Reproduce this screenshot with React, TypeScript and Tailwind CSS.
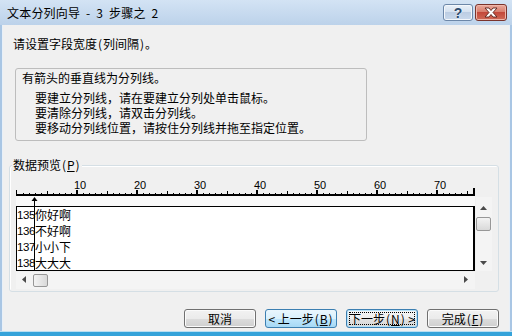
import React from "react";

const cjk = "font-['Noto_Sans_CJK_SC',sans-serif]";

function Paren({ c }: { c: string }) {
  return <span className="inline-block w-[6px] text-center">{c}</span>;
}

function Ruler() {
  const marks: React.ReactNode[] = [];
  for (let c = 1; c <= 75; c++) {
    const x = 1 + 6 * c;
    if (c % 10 === 0) {
      marks.push(<rect key={c} x={x - 1} y={12} width={2} height={4} fill="#000" />);
      marks.push(
        <text key={"t" + c} x={6 * c - 2} y={11} fontSize={11} fontFamily="Liberation Sans, sans-serif" fill="#000">
          {c}
        </text>
      );
    } else if (c % 5 === 0) {
      marks.push(<rect key={c} x={x} y={13} width={1} height={3} fill="#000" />);
    } else {
      marks.push(<rect key={c} x={x} y={15} width={1} height={1} fill="#000" />);
    }
  }
  return (
    <svg width="460" height="28" viewBox="0 0 460 28" className="block">
      <rect x={0} y={18} width={459} height={10} fill="#f9f9f9" />
      <rect x={0} y={16} width={459} height={2} fill="#000" />
      <rect x={0} y={12} width={1} height={4} fill="#000" />
      <rect x={457} y={10} width={2} height={6} fill="#000" />
      {marks}
      <rect x={18} y={22} width={1} height={6} fill="#000" />
      <path d="M18.5 19 L15.5 23 L21.5 23 Z" fill="#000" />
    </svg>
  );
}

function Arrow({ dir }: { dir: "up" | "down" | "left" | "right" }) {
  if (dir === "up" || dir === "down") {
    return (
      <svg width="7" height="4" viewBox="0 0 7 4" className="block">
        <path d={dir === "up" ? "M3.5 0 L7 4 L0 4 Z" : "M0 0 L7 0 L3.5 4 Z"} fill="#4a4a4a" />
      </svg>
    );
  }
  return (
    <svg width="4" height="7" viewBox="0 0 4 7" className="block">
      <path d={dir === "left" ? "M0 3.5 L4 0 L4 7 Z" : "M0 0 L4 3.5 L0 7 Z"} fill="#4a4a4a" />
    </svg>
  );
}

const rows = [
  ["135", "你好啊"],
  ["136", "不好啊"],
  ["137", "小小下"],
  ["138", "大大大"],
];

function Btn({
  children,
  kind = "normal",
}: {
  children: React.ReactNode;
  kind?: "normal" | "hover" | "default";
}) {
  if (kind === "hover") {
    return (
      <div className="relative flex h-[19px] w-[72px] items-center justify-center rounded-[3px] border border-[#3c7fb1] bg-[linear-gradient(#eaf6fd,#d9f0fc_50%,#bee6fd_50%,#a7d9f5)] text-[12px] leading-[16px] text-black">
        {children}
      </div>
    );
  }
  if (kind === "default") {
    return (
      <div className="relative flex h-[19px] w-[72px] items-center justify-center rounded-[3px] border border-[#3c7fb1] bg-[linear-gradient(#f6f6f6,#eeeeee_50%,#e2e2e2_50%,#d6d6d6)] text-[12px] leading-[16px] text-black shadow-[inset_0_0_0_1px_#b6e1f8]">
        <div className="absolute inset-[2px] border border-dotted border-black" />
        {children}
      </div>
    );
  }
  return (
    <div className="relative flex h-[19px] w-[72px] items-center justify-center rounded-[3px] border border-[#707070] bg-[linear-gradient(#f2f2f2,#ebebeb_50%,#dddddd_50%,#cfcfcf)] text-[12px] leading-[16px] text-black shadow-[inset_0_0_0_1px_#fbfbfb]">
      {children}
    </div>
  );
}

export default function App() {
  return (
    <div className={`flex h-[336px] w-[512px] flex-col overflow-hidden bg-[#f0f0f0] text-black ${cjk}`}>
      {/* title bar */}
      <div className="flex h-[25px] shrink-0 items-start bg-[linear-gradient(#d3e3f4,#bcd2ea)] pr-[5px]">
        <div className="pl-[7px] pt-[4px] text-[12px] leading-[17px] tracking-[0.2px] [word-spacing:3px] text-black">
          文本分列向导 - 3 步骤之 2
        </div>
        <div className="ml-auto mt-[4px] flex gap-[2px]">
          <div className="flex h-[17px] w-[30px] items-center justify-center rounded-[3px] border border-[#6c87a8] bg-[linear-gradient(#e9f0f8,#d3e0ef_50%,#bccde3_50%,#c9d9ec)] shadow-[inset_0_0_0_1px_#f3f7fb]">
            <span className="font-['Liberation_Sans',sans-serif] text-[14px] font-bold leading-none text-[#2c4a6e] [text-shadow:0_0_2px_#fff]">?</span>
          </div>
          <div className="flex h-[17px] w-[32px] items-center justify-center rounded-[3px] border border-[#7a332b] bg-[linear-gradient(#e9a99c,#d67a69_50%,#c3483a_50%,#cf6a57)] shadow-[inset_0_0_0_1px_#eeb6aa]">
            <svg width="14" height="11" viewBox="0 0 14 11">
              <path
                d="M1 1 H5 L7 3.5 L9 1 H13 L9 5.5 L13 10 H9 L7 7.5 L5 10 H1 L5 5.5 Z"
                fill="#fff"
                stroke="#5a2019"
                strokeWidth="0.9"
                strokeLinejoin="round"
              />
            </svg>
          </div>
        </div>
      </div>

      <div className="flex min-h-0 flex-1">
        <div className="w-[3px] shrink-0 border-r border-r-[#e8f0f8] bg-[#a9c6e4]" />
        {/* client */}
        <div className="flex min-w-0 flex-1 flex-col">
          <div className="ml-[10px] mt-[11px] text-[12px] leading-[16px]">
            请设置字段宽度<Paren c="(" />列间隔<Paren c=")" />。
          </div>

          <div className="ml-[12px] mt-[16px] flex h-[73px] w-[352px] flex-col rounded-[3px] border border-[#bdbdbd] pl-[6px] pt-[1px] text-[12px] leading-[15px]">
            <div>有箭头的垂直线为分列线。</div>
            <div className="mt-[5px] pl-[13px]">
              <div>要建立分列线，请在要建立分列处单击鼠标。</div>
              <div>要清除分列线，请双击分列线。</div>
              <div>要移动分列线位置，请按住分列线并拖至指定位置。</div>
            </div>
          </div>

          {/* group box */}
          <div className="relative ml-[6px] mt-[24px] h-[127px] w-[490px] rounded-[3px] border border-[#d5dfe5] shadow-[inset_1px_1px_0_#fff]">
            <div className="absolute left-[2px] top-[-9px] bg-[#f0f0f0] px-[1px] text-[12px] leading-[16px]">
              数据预览<Paren c="(" />
              <span className="underline">P</span>
              <Paren c=")" />
            </div>
            <div className="flex pl-[6px] pt-[12px]">
              <div className="flex w-[460px] flex-col">
                <Ruler />
                <div className="relative h-[65px] w-[459px] overflow-hidden border border-r-2 border-black bg-white text-[12px] leading-[16px]">
                  {rows.map(([n, t]) => (
                    <div key={n} className="flex h-[16px] items-center">
                      <span className="inline-block w-[18px] font-['Liberation_Sans',sans-serif] text-[11.5px] tracking-[-0.4px]">{n}</span>
                      <span>{t}</span>
                    </div>
                  ))}
                  <div className="absolute bottom-0 left-[17px] top-0 w-px bg-black" />
                </div>
                <div className="mt-[1px] flex h-[17px] w-[459px] items-start bg-[#f4f4f4]">
                  <div className="ml-[6px] mt-[4px]">
                    <Arrow dir="left" />
                  </div>
                  <div className="ml-[7px] mt-[2px] h-[13px] w-[15px] rounded-[2px] border border-[#979797] bg-[linear-gradient(90deg,#f3f3f3,#e6e6e6_50%,#d9d9d9)]" />
                  <div className="ml-auto mr-[7px] mt-[4px]">
                    <Arrow dir="right" />
                  </div>
                </div>
              </div>
              <div className="mt-[19px] flex h-[74px] w-[16px] flex-col bg-[#f4f4f4]">
                <div className="flex w-[15px] justify-center pt-[9px]">
                  <Arrow dir="up" />
                </div>
                <div className="mt-[7px] h-[14px] w-[15px] rounded-[2px] border border-[#979797] bg-[linear-gradient(#f3f3f3,#e6e6e6_50%,#d9d9d9)]" />
                <div className="mt-[30px] flex w-[15px] justify-center">
                  <Arrow dir="down" />
                </div>
              </div>
            </div>
          </div>

          {/* buttons */}
          <div className="ml-[181px] mt-[17px] flex gap-[9px]">
            <Btn>取消</Btn>
            <Btn kind="hover">
              &lt;&nbsp;上一步
              <Paren c="(" />
              <span className="underline">B</span>
              <Paren c=")" />
            </Btn>
            <Btn kind="default">
              下一步
              <Paren c="(" />
              <span className="underline">N</span>
              <Paren c=")" />
              &nbsp;&gt;
            </Btn>
            <Btn>
              完成
              <Paren c="(" />
              <span className="underline">F</span>
              <Paren c=")" />
            </Btn>
          </div>
        </div>
        <div className="w-[3px] shrink-0 border-l border-l-[#e8f0f8] bg-[#a9c6e4]" />
      </div>

      <div className="h-[5px] shrink-0 border-t border-t-[#b9dff2] bg-[#35a3da]" />
    </div>
  );
}
